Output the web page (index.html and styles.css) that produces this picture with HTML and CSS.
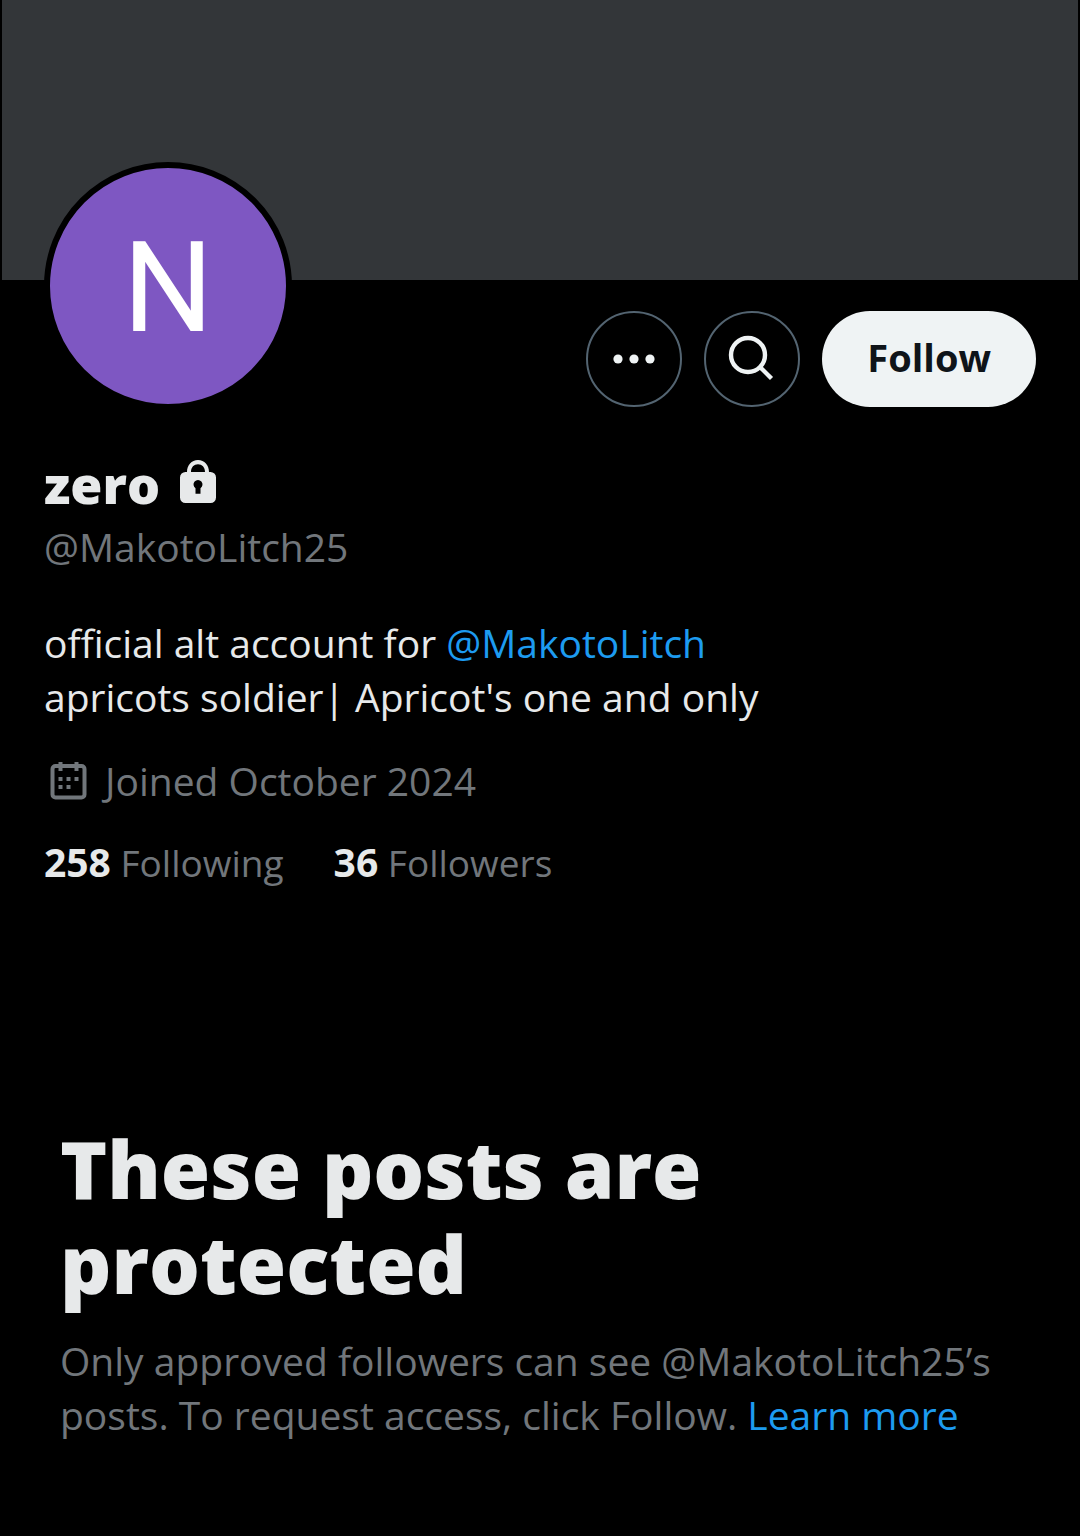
FILE: index.html
```html
<!DOCTYPE html>
<html lang="en">
<head>
  <meta charset="UTF-8" />
  <meta name="viewport" content="width=device-width, initial-scale=1.0"/>
  <title>zero (@MakotoLitch25)</title>
  <link rel="stylesheet" href="styles.css">
</head>
<body>

  <main class="profile">
    <div class="banner"></div>

    <div class="top-row">
      <div class="avatar">N</div>
      <div class="actions">
        <button class="icon-btn" aria-label="More">
          <svg viewBox="0 0 48 48"><circle cx="8" cy="24" r="4.6"/><circle cx="24" cy="24" r="4.6"/><circle cx="40" cy="24" r="4.6"/></svg>
        </button>
        <button class="icon-btn" aria-label="Search">
          <svg viewBox="0 0 48 48"><g fill="none" stroke="currentColor" stroke-width="4.4"><circle cx="20" cy="20" r="17"/><path d="M32 32L43.500 43.500"/></g></svg>
        </button>
        <button class="follow-btn">Follow</button>
      </div>
    </div>

    <section class="info">
      <h1 class="name">zero
        <svg class="lock" viewBox="0 0 36 44" role="img" aria-label="Protected account"><path fill-rule="evenodd" d="M7 12C7 5 11.500 0 18 0s11 5 11 12h1.500a5.500 5.500 0 0 1 5.500 5.500v20a5.500 5.500 0 0 1-5.500 5.500h-25A5.500 5.500 0 0 1 0 37.500v-20A5.500 5.500 0 0 1 5.500 12zM11 12h14c0-5-3-7.800-7-7.800S11 7 11 12zM15.500 33.700h5v-5.500a4.500 4.500 0 1 0-5 0z"/></svg>
      </h1>
      <p class="handle">@MakotoLitch25</p>

      <p class="bio">official alt account for <a href="#">@MakotoLitch</a><br>apricots soldier| Apricot's one and only</p>

      <p class="joined">
        <svg class="calendar" viewBox="0 0 36 38"><rect x="2" y="4" width="32" height="31.500" rx="3" fill="none" stroke="currentColor" stroke-width="4"/><path d="M8 0h4v9H8zM24 0h4v9h-4zM8 15h4v4H8zM16 15h4v4h-4zM24 15h4v4h-4zM8 23h4v4H8zM16 23h4v4h-4z"/></svg>
        Joined October 2024
      </p>

      <div class="stats">
        <a href="#"><b>258</b> Following</a>
        <a href="#"><b>36</b> Followers</a>
      </div>
    </section>

    <section class="protected">
      <h2>These posts are protected</h2>
      <p>Only approved followers can see @MakotoLitch25’s posts. To request access, click Follow. <a href="#">Learn more</a></p>
    </section>
  </main>

</body>
</html>
```
FILE: styles.css
```css
* {
  box-sizing: border-box;
}

body {
  margin: 0;
  background: #000;
  color: #e7e9ea;
  font-family: 'Open Sans', sans-serif;
  font-size: 39px;
  line-height: 54px;
}

h1, h2, p {
  margin: 0;
}

a {
  color: #1d9bf0;
  text-decoration: none;
}

a:hover {
  text-decoration: underline;
}

.banner {
  height: 280px;
  margin: 0 2px;
  background: #333639;
}

.top-row {
  display: flex;
  justify-content: space-between;
  padding: 0 44px;
}

/* overlaps the bottom of the banner */
.avatar {
  display: flex;
  align-items: center;
  justify-content: center;
  width: 248px;
  height: 248px;
  margin-top: -118px;
  padding-top: 4px;
  border: 6px solid #000;
  border-radius: 50%;
  background: #7e57c2;
  color: #fff;
  font-family: Roboto, sans-serif;
  font-size: 127px;
}

.actions {
  display: flex;
  gap: 22px;
  padding-top: 31px;
}

.icon-btn {
  display: flex;
  align-items: center;
  justify-content: center;
  width: 96px;
  height: 96px;
  padding: 0;
  border: 2px solid #536471;
  border-radius: 50%;
  background: transparent;
  color: #eff3f4;
  cursor: pointer;
}

.icon-btn svg {
  width: 48px;
  height: 48px;
  fill: currentColor;
}

.follow-btn {
  height: 96px;
  padding: 0 45px 4px;
  border: none;
  border-radius: 48px;
  background: #eff3f4;
  color: #0f1419;
  font-family: inherit;
  font-size: 38px;
  font-weight: 700;
  cursor: pointer;
}

.info {
  padding: 41px 44px 0;
}

.name {
  display: flex;
  align-items: center;
  gap: 20px;
  font-size: 52px;
  font-weight: 800;
  line-height: 66px;
  margin-bottom: 3px;
}

.lock {
  width: 36px;
  height: 44px;
  margin-bottom: 4px;
  fill: currentColor;
}

.handle,
.joined {
  color: #71767b;
}

.bio {
  margin-top: 42px;
}

.joined {
  display: flex;
  align-items: center;
  gap: 18px;
  margin-top: 30px;
  padding-left: 6px;
}

.calendar {
  width: 37px;
  height: 38px;
  fill: currentColor;
}

.stats {
  display: flex;
  gap: 50px;
  margin-top: 29px;
  font-size: 37px;
  line-height: 50px;
}

.stats a {
  color: #71767b;
}

.stats b {
  color: #e7e9ea;
  font-size: 39px;
}

.protected {
  padding: 232px 60px 60px;
}

.protected h2 {
  max-width: 860px;
  margin-bottom: 24px;
  font-size: 80px;
  font-weight: 800;
  line-height: 95px;
}

.protected p {
  color: #71767b;
}
```
